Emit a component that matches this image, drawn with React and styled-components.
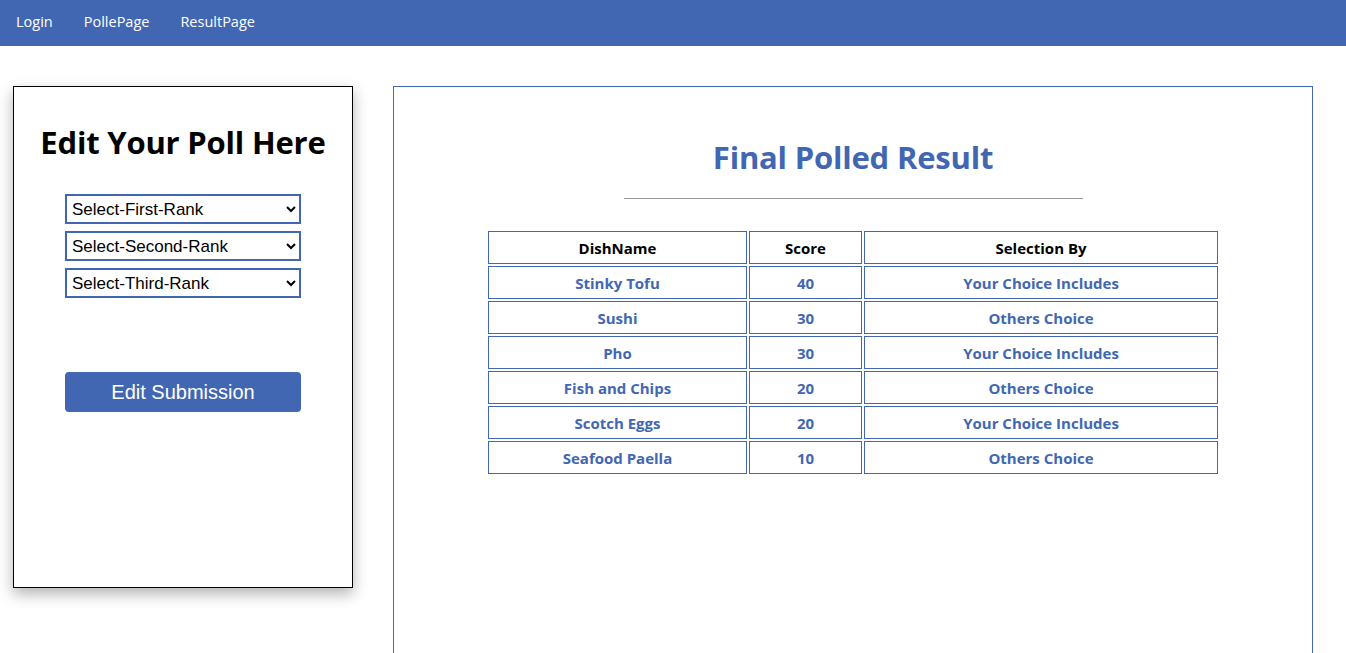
import React from 'react';
import styled, { createGlobalStyle } from 'styled-components';

const blue = '#4267b2';

const GlobalStyle = createGlobalStyle`
  body {
    margin: 0;
    font-family: "Open Sans", "Noto Sans", sans-serif;
    background: #fff;
  }
`;

const NavBar = styled.nav`
  height: 46px;
  box-sizing: border-box;
  padding: 0 0 4px 16px;
  background: ${blue};
  display: flex;
  align-items: center;
  gap: 31px;
`;

const NavLink = styled.a`
  color: #fff;
  font-size: 14.5px;
  text-decoration: none;
  font-family: "Open Sans", sans-serif;
`;

const Main = styled.main`
  display: flex;
  align-items: flex-start;
  padding: 40px 33px 0 13px;
  gap: 40px;
`;

const EditCard = styled.section`
  width: 338px;
  height: 500px;
  flex-shrink: 0;
  border: 1px solid #000;
  box-shadow: 0 6px 14px rgba(0, 0, 0, 0.3);
  display: flex;
  flex-direction: column;
  align-items: center;
`;

const CardTitle = styled.h1`
  margin: 34px 0 31px;
  font-size: 31px;
  font-weight: 700;
  color: #000;
  letter-spacing: -0.2px;
`;

const SelectStack = styled.div`
  display: flex;
  flex-direction: column;
  gap: 7px;
`;

const RankSelect = styled.select`
  width: 236px;
  height: 30px;
  border: 2px solid ${blue};
  border-radius: 0;
  background: #fff;
  font-family: "Liberation Sans", Arial, sans-serif;
  font-size: 17px;
  color: #000;
  padding: 0 1px;
`;

const SubmitButton = styled.button`
  margin-top: 74px;
  width: 236px;
  height: 40px;
  border: none;
  border-radius: 4px;
  background: ${blue};
  color: #fff;
  font-family: "Liberation Sans", Arial, sans-serif;
  font-size: 20px;
`;

const ResultPanel = styled.section`
  flex: 1;
  height: 600px;
  border: 1px solid ${blue};
  display: flex;
  flex-direction: column;
  align-items: center;
`;

const ResultTitle = styled.h2`
  margin: 49px 0 0;
  font-size: 31px;
  font-weight: 700;
  color: ${blue};
  letter-spacing: -0.2px;
`;

const Divider = styled.hr`
  width: 50%;
  margin: 20px 0 30px;
  border: none;
  border-top: 1px solid #999;
`;

const ResultTable = styled.table`
  width: 734px;
  border-collapse: separate;
  border-spacing: 2px;
  font-family: "Open Sans", sans-serif;
  font-size: 15px;
  font-weight: 700;
`;

const HeadCell = styled.th`
  height: 31px;
  padding: 0;
  border: 1px solid ${blue};
  color: #000;
  width: ${p => p.$w}px;
`;

const Cell = styled.td`
  height: 31px;
  padding: 0;
  border: 1px solid ${blue};
  color: ${blue};
  text-align: center;
`;

const rows = [
  ['Stinky Tofu', 40, 'Your Choice Includes'],
  ['Sushi', 30, 'Others Choice'],
  ['Pho', 30, 'Your Choice Includes'],
  ['Fish and Chips', 20, 'Others Choice'],
  ['Scotch Eggs', 20, 'Your Choice Includes'],
  ['Seafood Paella', 10, 'Others Choice'],
];

export default function App() {
  return (
    <>
      <GlobalStyle />
      <NavBar>
        <NavLink href="#">Login</NavLink>
        <NavLink href="#">PollePage</NavLink>
        <NavLink href="#">ResultPage</NavLink>
      </NavBar>
      <Main>
        <EditCard>
          <CardTitle>Edit Your Poll Here</CardTitle>
          <SelectStack>
            <RankSelect defaultValue="">
              <option value="">Select-First-Rank</option>
            </RankSelect>
            <RankSelect defaultValue="">
              <option value="">Select-Second-Rank</option>
            </RankSelect>
            <RankSelect defaultValue="">
              <option value="">Select-Third-Rank</option>
            </RankSelect>
          </SelectStack>
          <SubmitButton>Edit Submission</SubmitButton>
        </EditCard>
        <ResultPanel>
          <ResultTitle>Final Polled Result</ResultTitle>
          <Divider />
          <ResultTable>
            <thead>
              <tr>
                <HeadCell $w={257}>DishName</HeadCell>
                <HeadCell $w={111}>Score</HeadCell>
                <HeadCell $w={352}>Selection By</HeadCell>
              </tr>
            </thead>
            <tbody>
              {rows.map(([name, score, by]) => (
                <tr key={name}>
                  <Cell>{name}</Cell>
                  <Cell>{score}</Cell>
                  <Cell>{by}</Cell>
                </tr>
              ))}
            </tbody>
          </ResultTable>
        </ResultPanel>
      </Main>
    </>
  );
}
